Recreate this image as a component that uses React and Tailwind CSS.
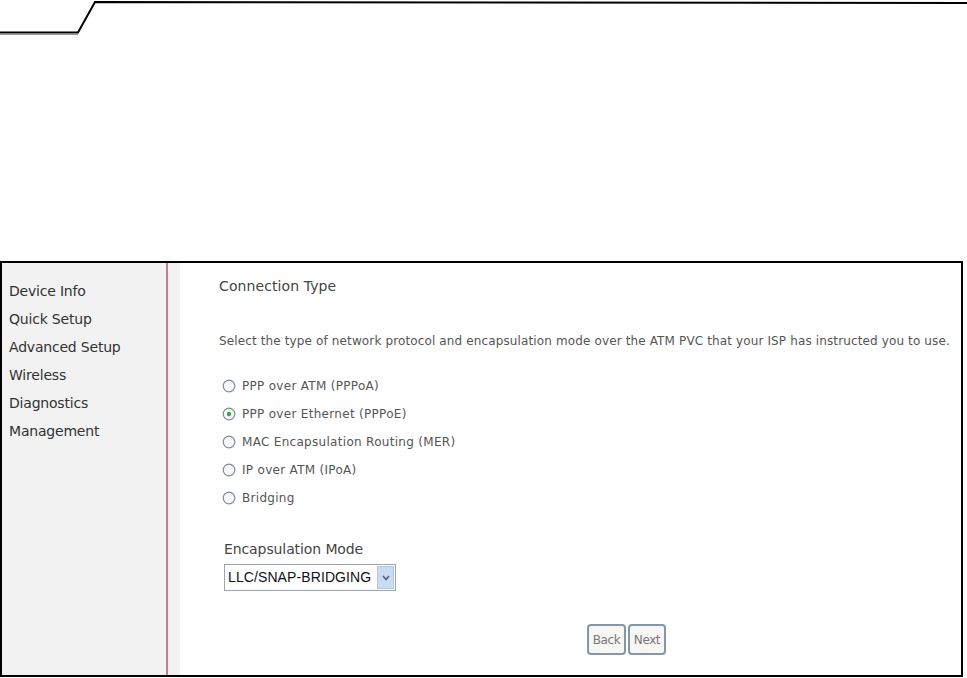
import React from 'react';

const protocols = [
  { label: 'PPP over ATM (PPPoA)', checked: false },
  { label: 'PPP over Ethernet (PPPoE)', checked: true },
  { label: 'MAC Encapsulation Routing (MER)', checked: false },
  { label: 'IP over ATM (IPoA)', checked: false },
  { label: 'Bridging', checked: false },
];

const menu = ['Device Info', 'Quick Setup', 'Advanced Setup', 'Wireless', 'Diagnostics', 'Management'];

const Radio = ({ checked }) => (
  <svg width="14" height="14" viewBox="0 0 14 14" className="shrink-0">
    <circle cx="7" cy="7" r="5.8" fill="#f7f7f7" stroke="#7f8c99" strokeWidth="1.2" />
    {checked && <circle cx="7" cy="7" r="2.2" fill="#3aa24a" />}
  </svg>
);

const App = () => {
  return (
    <div className="w-[967px] h-[678px] bg-white overflow-hidden" style={{ fontFamily: '"DejaVu Sans", Verdana, sans-serif' }}>
      {/* Header rule */}
      <svg width="967" height="40" viewBox="0 0 967 40" className="block">
        <path d="M0 32.5 L78 32.5 L95 2 L967 3" fill="none" stroke="#000" strokeWidth="2" />
        <path d="M0 34.5 L78 34.5" fill="none" stroke="#999" strokeWidth="1" />
      </svg>

      {/* Panel */}
      <div className="mt-[221px] w-[963px] h-[416px] border-2 border-black flex">
        {/* Sidebar */}
        <div className="w-[164px] bg-[#f2f2f2] pt-[14px] pl-[7px]">
          {menu.map((item) => (
            <div key={item} className="h-[28px] leading-[28px] text-[14px] text-[#333] tracking-[-0.2px]">
              {item}
            </div>
          ))}
        </div>
        <div className="w-[2px] bg-[#c97d95]" />
        <div className="w-[12px] bg-[#f2f2f2]" />

        {/* Content */}
        <div className="flex-1 bg-white pl-[39px] pt-[14px] text-[#555]">
          <div className="text-[14px] leading-[18px] tracking-[0.1px] text-[#444]">Connection Type</div>
          <div className="mt-[37px] text-[12px] leading-[18px] tracking-[0.13px] whitespace-nowrap">
            Select the type of network protocol and encapsulation mode over the ATM PVC that your ISP has instructed you to use.
          </div>

          <div className="mt-[22px] ml-[3px] flex flex-col">
            {protocols.map((p) => (
              <div key={p.label} className="h-[28px] flex items-center gap-[6px] text-[12px] tracking-[0.3px]">
                <Radio checked={p.checked} />
                <span>{p.label}</span>
              </div>
            ))}
          </div>

          <div className="mt-[28px] ml-[5px] text-[14px] leading-[18px] tracking-[-0.1px] text-[#444]">Encapsulation Mode</div>
          <div className="mt-[6px] ml-[5px] w-[172px] h-[27px] border border-[#9aa5b3] bg-white flex items-center">
            <span className="flex-1 pl-[3px] text-[14px] text-[#111] tracking-[0.1px]" style={{ fontFamily: '"Liberation Sans", Arial, sans-serif' }}>
              LLC/SNAP-BRIDGING
            </span>
            <div className="w-[17px] h-[23px] mr-[1px] bg-[#c9dcf5] border border-[#b0c6e6] flex items-center justify-center">
              <svg width="8" height="6" viewBox="0 0 8 6">
                <path d="M1 1 L4 4.5 L7 1" fill="none" stroke="#4d6185" strokeWidth="1.6" />
              </svg>
            </div>
          </div>

          <div className="mt-[33px] ml-[368px] flex gap-[2px]">
            <button className="h-[31px] w-[39px] border-2 border-[#8496a8] rounded-[4px] bg-[#f6f6f2] text-[12px] text-[#777] tracking-[-0.4px]">
              Back
            </button>
            <button className="h-[31px] w-[38px] border-2 border-[#8496a8] rounded-[4px] bg-[#f6f6f2] text-[12px] text-[#777] tracking-[-0.4px]">
              Next
            </button>
          </div>
        </div>
      </div>
    </div>
  );
};

export default App;
